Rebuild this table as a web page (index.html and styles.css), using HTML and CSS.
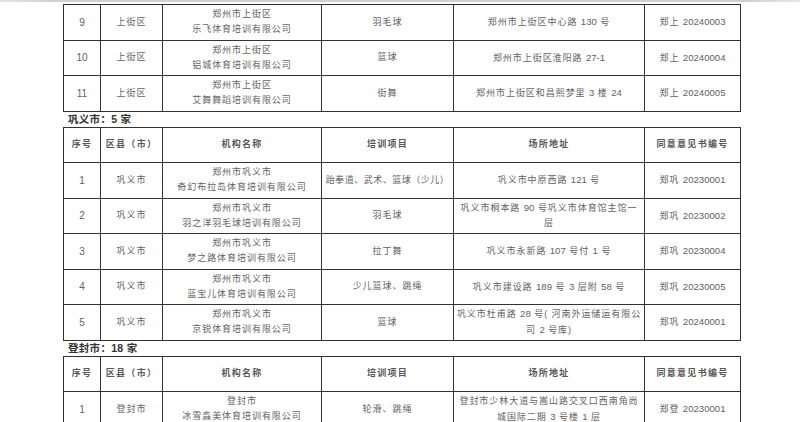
FILE: index.html
```html
<!DOCTYPE html>
<html lang="zh-CN">
<head>
<meta charset="utf-8">
<title>体育培训机构名单</title>
<link rel="stylesheet" href="styles.css">
</head>
<body>
<div class="page-edge"></div>
<div class="sheet">
  <table class="grid first">
    <colgroup><col class="c1"><col class="c2"><col class="c3"><col class="c4"><col class="c5"><col class="c6"></colgroup>
    <tbody>
      <tr><td class="num">9</td><td>上街区</td><td>郑州市上街区<br>乐飞体育培训有限公司</td><td>羽毛球</td><td>郑州市上街区中心路 <span class="n">130</span> 号</td><td>郑上 <span class="n">20240003</span></td></tr>
      <tr><td class="num">10</td><td>上街区</td><td>郑州市上街区<br>铝城体育培训有限公司</td><td>篮球</td><td>郑州市上街区淮阳路 <span class="n">27-1</span></td><td>郑上 <span class="n">20240004</span></td></tr>
      <tr><td class="num">11</td><td>上街区</td><td>郑州市上街区<br>艾舞舞蹈培训有限公司</td><td>街舞</td><td>郑州市上街区和昌熙梦里 <span class="n">3</span> 楼 <span class="n">24</span></td><td>郑上 <span class="n">20240005</span></td></tr>
    </tbody>
  </table>

  <div class="region">巩义市：<span class="rn">5</span> 家</div>
  <table class="grid">
    <colgroup><col class="c1"><col class="c2"><col class="c3"><col class="c4"><col class="c5"><col class="c6"></colgroup>
    <thead>
      <tr><th>序号</th><th>区县（市）</th><th>机构名称</th><th>培训项目</th><th>场所地址</th><th>同意意见书编号</th></tr>
    </thead>
    <tbody>
      <tr><td class="num">1</td><td>巩义市</td><td>郑州市巩义市<br>奇幻布拉岛体育培训有限公司</td><td class="tight">跆拳道、武术、篮球（少儿）</td><td>巩义市中原西路 <span class="n">121</span> 号</td><td>郑巩 <span class="n">20230001</span></td></tr>
      <tr><td class="num">2</td><td>巩义市</td><td>郑州市巩义市<br>羽之洋羽毛球培训有限公司</td><td>羽毛球</td><td>巩义市桐本路 <span class="n">90</span> 号巩义市体育馆主馆一<br>层</td><td>郑巩 <span class="n">20230002</span></td></tr>
      <tr><td class="num">3</td><td>巩义市</td><td>郑州市巩义市<br>梦之路体育培训有限公司</td><td>拉丁舞</td><td>巩义市永新路 <span class="n">107</span> 号付 <span class="n">1</span> 号</td><td>郑巩 <span class="n">20230004</span></td></tr>
      <tr><td class="num">4</td><td>巩义市</td><td>郑州市巩义市<br>蓝宝儿体育培训有限公司</td><td>少儿篮球、跳绳</td><td>巩义市建设路 <span class="n">189</span> 号 <span class="n">3</span> 层附 <span class="n">58</span> 号</td><td>郑巩 <span class="n">20230005</span></td></tr>
      <tr><td class="num">5</td><td>巩义市</td><td>郑州市巩义市<br>京锐体育培训有限公司</td><td>篮球</td><td>巩义市杜甫路 <span class="n">28</span> 号( 河南外运储运有限公<br>司 <span class="n">2</span> 号库)</td><td>郑巩 <span class="n">20240001</span></td></tr>
    </tbody>
  </table>

  <div class="region">登封市：<span class="rn">18</span> 家</div>
  <table class="grid">
    <colgroup><col class="c1"><col class="c2"><col class="c3"><col class="c4"><col class="c5"><col class="c6"></colgroup>
    <thead>
      <tr><th>序号</th><th>区县（市）</th><th>机构名称</th><th>培训项目</th><th>场所地址</th><th>同意意见书编号</th></tr>
    </thead>
    <tbody>
      <tr><td class="num">1</td><td>登封市</td><td>登封市<br>冰雪淼美体育培训有限公司</td><td>轮滑、跳绳</td><td>登封市少林大道与嵩山路交叉口西南角尚<br>城国际二期 <span class="n">3</span> 号楼 <span class="n">1</span> 层</td><td>郑登 <span class="n">20230001</span></td></tr>
    </tbody>
  </table>
</div>
</body>
</html>
```

FILE: styles.css
```css
html, body {
  margin: 0;
  padding: 0;
  background: #ffffff;
  overflow: hidden;
}

body {
  width: 800px;
  height: 422px;
  font-family: "Liberation Sans", "Noto Sans CJK SC", sans-serif;
  color: #626262;
}

.page-edge {
  height: 2px;
  background: linear-gradient(to right, #e4e4e4 0px, #cfcfcf 55px, #cfcfcf 745px, #e6e6e6 800px);
}

.sheet {
  padding: 2px 0 0 63px;
}

.grid {
  width: 677px;
  table-layout: fixed;
  border-collapse: collapse;
  border: 1px solid #333333;
}

.grid .c1 { width: 37px; }
.grid .c2 { width: 62px; }
.grid .c3 { width: 159px; }
.grid .c4 { width: 132px; }
.grid .c5 { width: 191px; }
.grid .c6 { width: 96px; }

.grid tr {
  height: 35.5px;
}

.grid td,
.grid th {
  border: 1px solid #333333;
  padding: 0;
  text-align: center;
  vertical-align: middle;
  white-space: nowrap;
  font-size: 9px;
  line-height: 15px;
  letter-spacing: 0.95px;
}

.grid th {
  font-weight: 700;
  color: #585858;
  letter-spacing: 1.3px;
}

.grid td.num {
  font-size: 10px;
  letter-spacing: 0;
}

.grid td.tight {
  letter-spacing: 0.5px;
}

.n {
  font-size: 9.6px;
  letter-spacing: 0;
}

.region {
  height: 15px;
  line-height: 15px;
  padding-left: 5px;
  font-size: 10.5px;
  font-weight: 700;
  color: #333333;
  letter-spacing: 0.3px;
}

.region .rn {
  font-size: 10.5px;
}
```
